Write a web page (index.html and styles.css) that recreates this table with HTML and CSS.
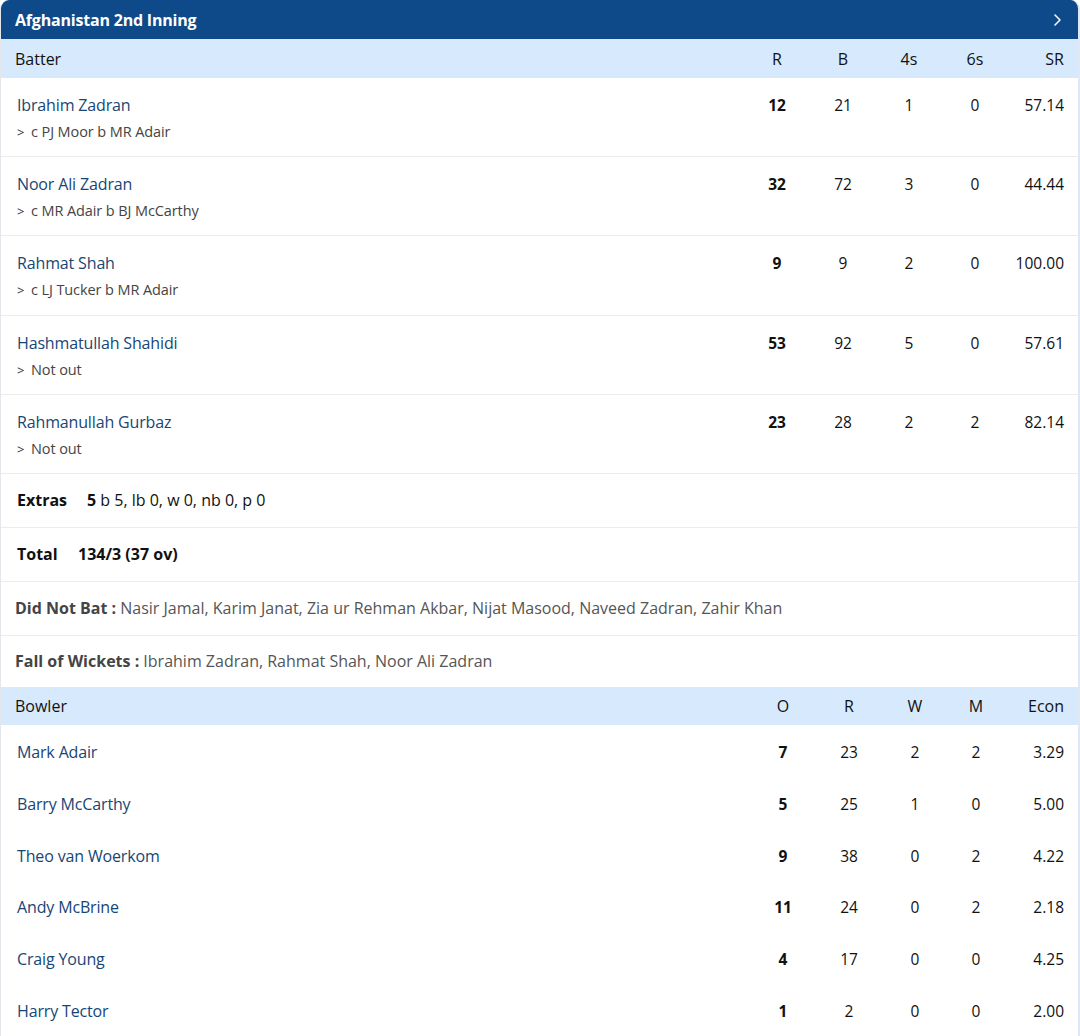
FILE: index.html
```html
<!DOCTYPE html>
<html>
<head>
<meta charset="utf-8">
<link rel="stylesheet" href="styles.css">
</head>
<body>
<div class="card">
  <div class="title">
    <span>Afghanistan 2nd Inning</span>
    <svg class="chev" width="10" height="14" viewBox="0 0 10 14"><path d="M3 2 L8 7 L3 12" fill="none" stroke="#fff" stroke-width="1.5" stroke-linecap="round" stroke-linejoin="round"/></svg>
  </div>

  <div class="thead bat first">
    <div class="name-h">Batter</div><div class="c">R</div><div class="c">B</div><div class="c">4s</div><div class="c">6s</div><div class="r">SR</div>
  </div>

  <div class="brow bat">
    <div><div class="pname">Ibrahim Zadran</div><div class="dis"><span class="gt">&gt;</span>c PJ Moor b MR Adair</div></div>
    <div class="c b">12</div><div class="c">21</div><div class="c">1</div><div class="c">0</div><div class="r">57.14</div>
  </div>
  <div class="brow bat">
    <div><div class="pname">Noor Ali Zadran</div><div class="dis"><span class="gt">&gt;</span>c MR Adair b BJ McCarthy</div></div>
    <div class="c b">32</div><div class="c">72</div><div class="c">3</div><div class="c">0</div><div class="r">44.44</div>
  </div>
  <div class="brow bat">
    <div><div class="pname">Rahmat Shah</div><div class="dis"><span class="gt">&gt;</span>c LJ Tucker b MR Adair</div></div>
    <div class="c b">9</div><div class="c">9</div><div class="c">2</div><div class="c">0</div><div class="r">100.00</div>
  </div>
  <div class="brow bat">
    <div><div class="pname">Hashmatullah Shahidi</div><div class="dis"><span class="gt">&gt;</span>Not out</div></div>
    <div class="c b">53</div><div class="c">92</div><div class="c">5</div><div class="c">0</div><div class="r">57.61</div>
  </div>
  <div class="brow bat">
    <div><div class="pname">Rahmanullah Gurbaz</div><div class="dis"><span class="gt">&gt;</span>Not out</div></div>
    <div class="c b">23</div><div class="c">28</div><div class="c">2</div><div class="c">2</div><div class="r">82.14</div>
  </div>

  <div class="sumrow"><span class="lbl">Extras</span><span class="val"><b>5</b> b 5, lb 0, w 0, nb 0, p 0</span></div>
  <div class="sumrow"><span class="lbl tot">Total</span><span class="val"><b>134/3 (37 ov)</b></span></div>
  <div class="inforow"><b>Did Not Bat :</b> Nasir Jamal, Karim Janat, Zia ur Rehman Akbar, Nijat Masood, Naveed Zadran, Zahir Khan</div>
  <div class="inforow last"><b>Fall of Wickets :</b> Ibrahim Zadran, Rahmat Shah, Noor Ali Zadran</div>

  <div class="thead bowl">
    <div class="name-h">Bowler</div><div class="c">O</div><div class="c">R</div><div class="c">W</div><div class="c">M</div><div class="r">Econ</div>
  </div>
  <div class="wrow bowl"><div class="pname">Mark Adair</div><div class="c b">7</div><div class="c">23</div><div class="c">2</div><div class="c">2</div><div class="r">3.29</div></div>
  <div class="wrow bowl"><div class="pname">Barry McCarthy</div><div class="c b">5</div><div class="c">25</div><div class="c">1</div><div class="c">0</div><div class="r">5.00</div></div>
  <div class="wrow bowl"><div class="pname">Theo van Woerkom</div><div class="c b">9</div><div class="c">38</div><div class="c">0</div><div class="c">2</div><div class="r">4.22</div></div>
  <div class="wrow bowl"><div class="pname">Andy McBrine</div><div class="c b">11</div><div class="c">24</div><div class="c">0</div><div class="c">2</div><div class="r">2.18</div></div>
  <div class="wrow bowl"><div class="pname">Craig Young</div><div class="c b">4</div><div class="c">17</div><div class="c">0</div><div class="c">0</div><div class="r">4.25</div></div>
  <div class="wrow bowl"><div class="pname">Harry Tector</div><div class="c b">1</div><div class="c">2</div><div class="c">0</div><div class="c">0</div><div class="r">2.00</div></div>
</div>
</body>
</html>
```

FILE: styles.css
```css
* { box-sizing: border-box; }
html, body { margin: 0; padding: 0; background: #fff; }
body {
  font-family: "Open Sans", "Noto Sans", sans-serif;
  color: #111;
  width: 1080px;
}
.card {
  width: 1080px;
  border: 1px solid #e3e6ea;
  border-right: 2px solid #dfe9f6;
  border-top: none;
  border-radius: 9px 9px 0 0;
  overflow: hidden;
}
.title {
  height: 39px;
  background: #0e4a89;
  color: #fff;
  font-weight: 700;
  font-size: 16px;
  display: flex;
  align-items: center;
  justify-content: space-between;
  padding: 0 16px 0 14px;
  letter-spacing: -0.2px;
}
.chev { display: block; }
.bat { display: grid; grid-template-columns: 1fr 66px 66px 66px 66px 56px; }
.bowl { display: grid; grid-template-columns: 1fr 66px 66px 66px 56px 60px; }
.c { text-align: center; }
.r { text-align: right; }
.b { font-weight: 700; }
.thead {
  height: 38px;
  background: #d7e9fc;
  align-items: center;
  padding: 0 14px 0 14px;
  font-size: 16px;
  color: #111;
}
.thead.first { height: 39px; padding-top: 1px; }
.brow {
  height: 79.2px;
  padding: 16px 14px 0 16px;
  border-bottom: 1px solid #ececec;
  font-size: 15.5px;
  line-height: 22px;
}
.pname {
  color: #174675;
  font-size: 16px;
  font-weight: 500;
  line-height: 22px;
  letter-spacing: -0.15px;
}
.dis {
  margin-top: 6px;
  font-size: 14.5px;
  line-height: 20px;
  color: #444;
  letter-spacing: -0.1px;
}
.gt {
  display: inline-block;
  width: 14px;
  font-size: 13px;
  color: #333;
}
.sumrow {
  height: 54px;
  border-bottom: 1px solid #ececec;
  display: flex;
  align-items: center;
  padding: 0 16px;
  font-size: 16px;
}
.lbl { font-weight: 700; width: 70px; }
.lbl.tot { width: 61px; }
.val b { font-weight: 700; }
.inforow {
  height: 54px;
  border-bottom: 1px solid #ececec;
  display: flex;
  align-items: center;
  padding: 0 14px;
  font-size: 16px;
  color: #555;
  white-space: pre;
}
.inforow b { color: #444; font-weight: 700; }
.inforow.last { height: 51px; border-bottom: none; }
.wrow {
  padding: 16px 14px 0 16px;
  font-size: 15.5px;
  line-height: 22px;
  height: 51.8px;
}
```
